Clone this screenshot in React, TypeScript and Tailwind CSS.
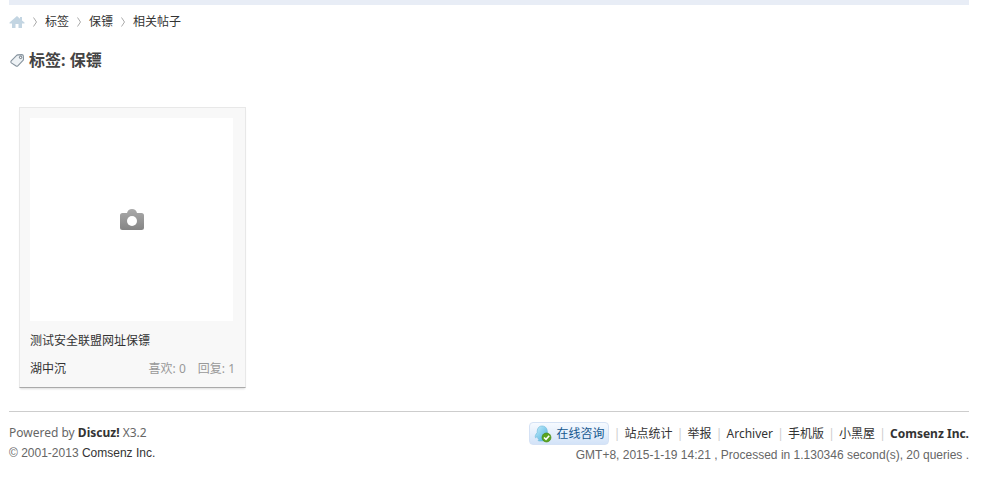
const CRUMBS = ["标签", "保镖", "相关帖子"];
const FOOTER_LINKS = ["站点统计", "举报", "Archiver", "手机版", "小黑屋"];

const UI_FONT = "font-['Noto_Sans','Noto_Sans_CJK_SC',sans-serif]";
const ARIAL_FONT = "font-['Liberation_Sans','Noto_Sans_CJK_SC',sans-serif]";

function HomeIcon() {
  return (
    <svg width="16" height="14" viewBox="0 0 16 14" fill="#c3d5e2">
      <path d="M8 1 L0.5 7.500 V8.500 H3 V13 H6.5 V9 H9.5 V13 H13 V8.500 H15.5 V7.500 L13 5.4 V2 H11 V3.700 Z" />
    </svg>
  );
}

function TagIcon() {
  return (
    <svg width="16" height="16" viewBox="0 0 16 16">
      <path
        d="M2.2 8.8 L7.4 3.6 Q8 3 8.8 2.9 L12.8 2.6 Q14.2 2.6 14.3 3.8 L14.5 7 Q14.5 8 13.8 8.7 L8.8 13.8 Q8 14.6 7.1 14 L2.3 10.900 Q1.3 10 2.2 8.8 Z"
        fill="#eef2f5"
        stroke="#85929d"
        strokeWidth="1.1"
      />
      <circle cx="11.6" cy="5.4" r="1.2" fill="#fff" stroke="#66727d" />
    </svg>
  );
}

function CameraIcon() {
  return (
    <svg width="24" height="22" viewBox="0 0 24 22">
      <defs>
        <linearGradient id="camera" x1="0" y1="0" x2="0" y2="1">
          <stop offset="0" stopColor="#aaa" />
          <stop offset="1" stopColor="#858585" />
        </linearGradient>
      </defs>
      <path
        d="M2.5 4 H7 Q8 0 12 0 Q16 0 17 4 H21.5 Q24 4 24 6.5 V18.5 Q24 21 21.5 21 H2.5 Q0 21 0 18.5 V6.5 Q0 4 2.5 4 Z"
        fill="url(#camera)"
      />
      <circle cx="12" cy="12" r="5" fill="#fff" />
    </svg>
  );
}

function ConsultIcon() {
  return (
    <svg width="18" height="18" viewBox="0 0 18 18">
      <defs>
        <linearGradient id="penguin" x1="0" y1="0" x2="1" y2="1">
          <stop offset="0" stopColor="#c8effc" />
          <stop offset="1" stopColor="#47aede" />
        </linearGradient>
      </defs>
      <path
        d="M8 1 C4.5 1 3 4 3.2 7.5 C1.5 9.5 0.8 11.5 1.5 12.8 L3.3 11.5 C3.5 13 4.3 14 5 14.5 C4 15 3.8 16 5 16 H10 L13.5 9 C13.7 4 12 1 8 1 Z"
        fill="url(#penguin)"
        stroke="#6bb8d8"
        strokeWidth="0.6"
      />
      <circle cx="12.5" cy="12.5" r="4.5" fill="#5aa520" stroke="#438413" strokeWidth="0.6" />
      <path d="M10 12.5 L12 14.3 L15.2 10.8" fill="none" stroke="#fff" strokeWidth="1.6" />
    </svg>
  );
}

function Chevron() {
  return (
    <svg width="4" height="10" viewBox="0 0 4 10" fill="none" stroke="#aaa">
      <path d="M0.5 0.5 L3.5 5 L0.5 9.5" />
    </svg>
  );
}

export default function App() {
  return (
    <div className={`ml-[9px] mr-8 text-xs text-[#444] ${UI_FONT}`}>
      <div className="h-[5px] bg-[#e8edf6]" />

      {/* Breadcrumb */}
      <nav className="flex h-[34px] items-center">
        <a href="#" aria-label="首页">
          <HomeIcon />
        </a>
        {CRUMBS.map((crumb) => (
          <span key={crumb} className="flex items-center">
            <span className="flex w-5 justify-center">
              <Chevron />
            </span>
            <a href="#" className="text-[#333]">{crumb}</a>
          </span>
        ))}
      </nav>

      <h1 className="mt-[9px] flex h-6 items-center gap-1 text-base font-bold">
        <TagIcon />
        标签: 保镖
      </h1>

      {/* Threads */}
      <main className="px-[10px] pt-[35px]">
        <article className="w-[227px] border border-b-[#aaa] border-[#e8e8e8] bg-[#f8f8f8] p-[10px] pb-2 shadow-[0_2px_2px_-1px_#ddd]">
          <a href="#" aria-label="测试安全联盟网址保镖" className="flex size-[203px] items-center justify-center bg-white">
            <CameraIcon />
          </a>
          <h2 className="mt-[10px] leading-5">
            <a href="#" className="text-[#333]">测试安全联盟网址保镖</a>
          </h2>
          <div className="mt-2 flex justify-between leading-5">
            <a href="#" className="text-[#333]">湖中沉</a>
            <div className="flex gap-3 text-[#999]">
              <span>喜欢: 0</span>
              <span>回复: 1</span>
            </div>
          </div>
        </article>
      </main>

      {/* Footer */}
      <footer className="mt-[23px] flex justify-between border-t border-[#cdcdcd] pt-[10px] text-[#666]">
        <div className="pt-px leading-5">
          <p>
            Powered by <a href="#" className="font-bold text-[#333]">Discuz!</a> X3.2
          </p>
          <p className={ARIAL_FONT}>
            © 2001-2013 <a href="#" className="text-[#333]">Comsenz Inc.</a>
          </p>
        </div>
        <div>
          <div className="flex h-[23px] items-center justify-end">
            <a
              href="#"
              className="flex h-[23px] items-center gap-1 rounded-sm border border-[#d5e2f5] bg-linear-to-b from-[#f6faff] to-[#d3e3f8] px-1 text-[#15578f]"
            >
              <ConsultIcon />
              在线咨询
            </a>
            {FOOTER_LINKS.map((link) => (
              <span key={link} className="flex">
                <span className="w-[15px] text-center text-[#ccc]">|</span>
                <a href="#" className="text-[#333]">{link}</a>
              </span>
            ))}
            <span className="w-[15px] text-center text-[#ccc]">|</span>
            <a href="#" className="font-bold text-[#333]">Comsenz Inc.</a>
          </div>
          <p className={`text-right leading-5 ${ARIAL_FONT}`}>
            GMT+8, 2015-1-19 14:21 , Processed in 1.130346 second(s), 20 queries .
          </p>
        </div>
      </footer>
    </div>
  );
}
